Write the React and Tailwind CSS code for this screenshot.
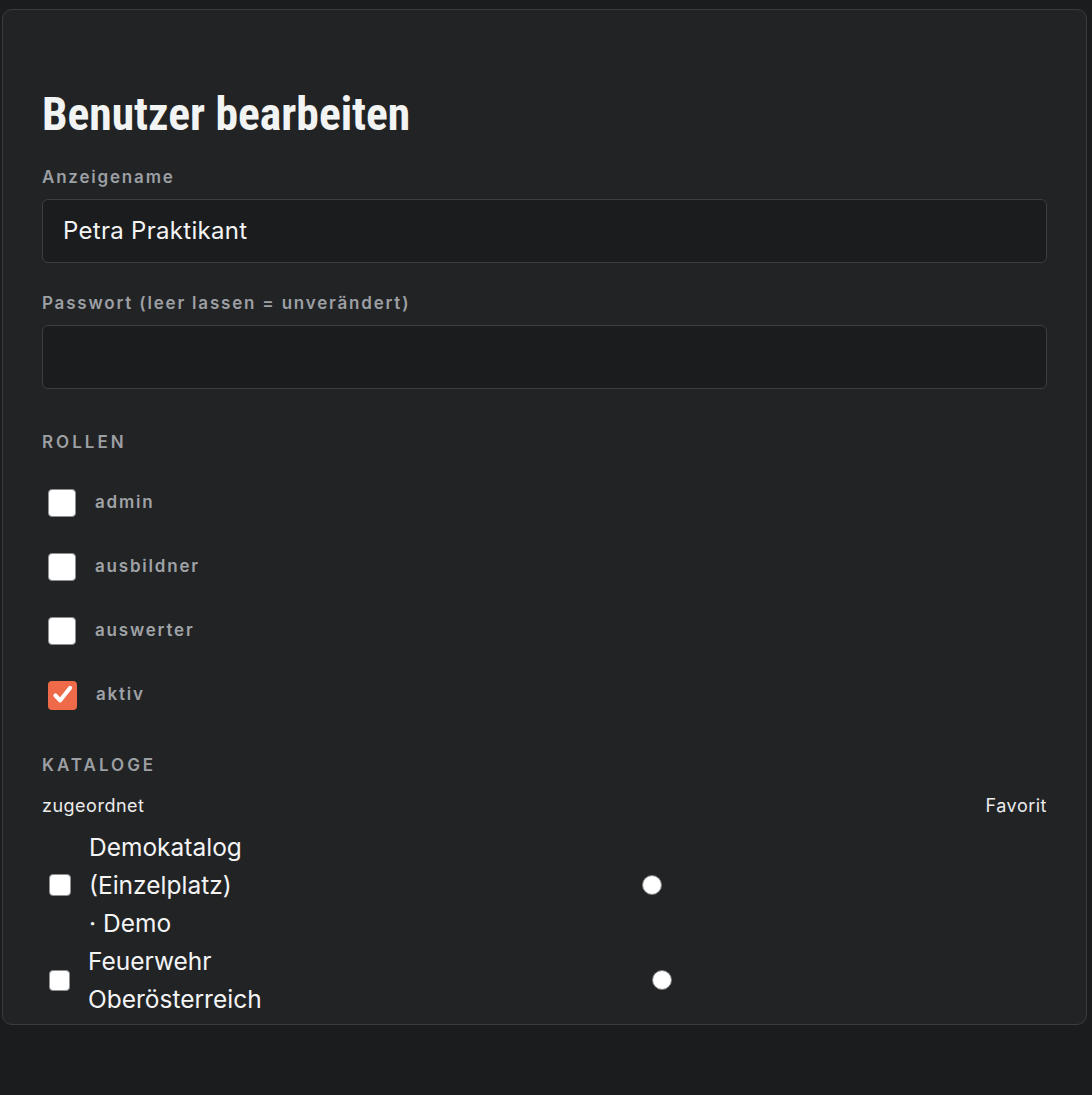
import React from "react";

const roles = [
  { name: "admin", checked: false },
  { name: "ausbildner", checked: false },
  { name: "auswerter", checked: false },
  { name: "aktiv", checked: true },
];

const catalogs = [
  { label: "Demokatalog (Einzelplatz) ·\u00a0Demo", box: "w-[22px] h-[22px]" },
  { label: "Feuerwehr Oberösterreich", box: "w-[21px] h-[21px]" },
];

function RoleBox({ checked }) {
  if (checked) {
    return (
      <span className="flex h-[29px] w-[29px] shrink-0 items-center justify-center rounded-[4px] bg-[#ee6a48]">
        <svg viewBox="0 0 24 24" className="h-[26px] w-[26px]" fill="none" stroke="white" strokeWidth="3.8" strokeLinecap="round" strokeLinejoin="round">
          <path d="M5 12.5l4.3 4.5L18.5 5.5" />
        </svg>
      </span>
    );
  }
  return <span className="block h-[28px] w-[28px] shrink-0 rounded-[4px] border-[1.5px] border-[#8d8f92] bg-white" />;
}

export default function App() {
  return (
    <div className="min-h-screen bg-[#1b1c1e] pl-[2px] pt-[9px]" style={{ fontFamily: "Inter, 'Noto Sans', sans-serif" }}>
      <div className="h-[1016px] w-[1085px] overflow-hidden rounded-[10px] border border-[#3a3d40] bg-[#222325] px-[39px] pt-[78px]">
        <h1
          className="text-[45.5px] font-bold leading-[54px] text-[#f2f3f3] font-stretch-condensed"
          style={{ fontFamily: "'Roboto Condensed', Roboto, sans-serif" }}
        >
          Benutzer bearbeiten
        </h1>

        <label className="mt-[23px] block text-[17px] font-semibold leading-[24px] tracking-[1.8px] text-[#9c9fa3]">
          Anzeigename
        </label>
        <div className="mt-[10px] flex h-[64px] items-center rounded-[6px] border border-[#3b3f41] bg-[#1b1c1e] px-[20px] text-[24px] tracking-[0.3px] text-[#f4f4f5]">
          Petra Praktikant
        </div>

        <label className="mt-[28px] block text-[17px] font-semibold leading-[24px] tracking-[1.8px] text-[#9c9fa3]">
          Passwort (leer lassen = unverändert)
        </label>
        <div className="mt-[10px] h-[64px] rounded-[6px] border border-[#3b3f41] bg-[#1b1c1e]" />

        <h2 className="mt-[41px] text-[17px] font-semibold uppercase leading-[24px] tracking-[3px] text-[#9c9fa3]">
          Rollen
        </h2>
        <div className="mt-[17px] flex flex-col">
          {roles.map((r) => (
            <div key={r.name} className="flex h-[64px] items-center gap-[19px] pl-[6px]">
              <RoleBox checked={r.checked} />
              <span className="text-[17px] font-semibold tracking-[1.8px] text-[#9fa2a6]">{r.name}</span>
            </div>
          ))}
        </div>

        <h2 className="mt-[26px] text-[17px] font-semibold uppercase leading-[24px] tracking-[3px] text-[#9c9fa3]">
          Kataloge
        </h2>
        <div className="mt-[17px] flex items-center justify-between text-[18px] leading-[24px] tracking-[0.5px] text-[#ececed]">
          <span>zugeordnet</span>
          <span>Favorit</span>
        </div>
        <div className="mt-[10px] flex flex-col">
          {catalogs.map((c) => (
            <div key={c.label} className="flex items-center">
              <span className={`ml-[7px] block shrink-0 rounded-[4px] border-[1.5px] border-[#8d8f92] bg-white ${c.box}`} />
              <span className="ml-[18px] w-min text-[24.5px] leading-[38px] text-[#f4f4f5]">{c.label}</span>
              <div className="ml-[16px] flex flex-1 justify-center">
                <span className="block h-[20px] w-[20px] rounded-full border-[1.5px] border-[#77797c] bg-white" />
              </div>
            </div>
          ))}
        </div>
      </div>
    </div>
  );
}
